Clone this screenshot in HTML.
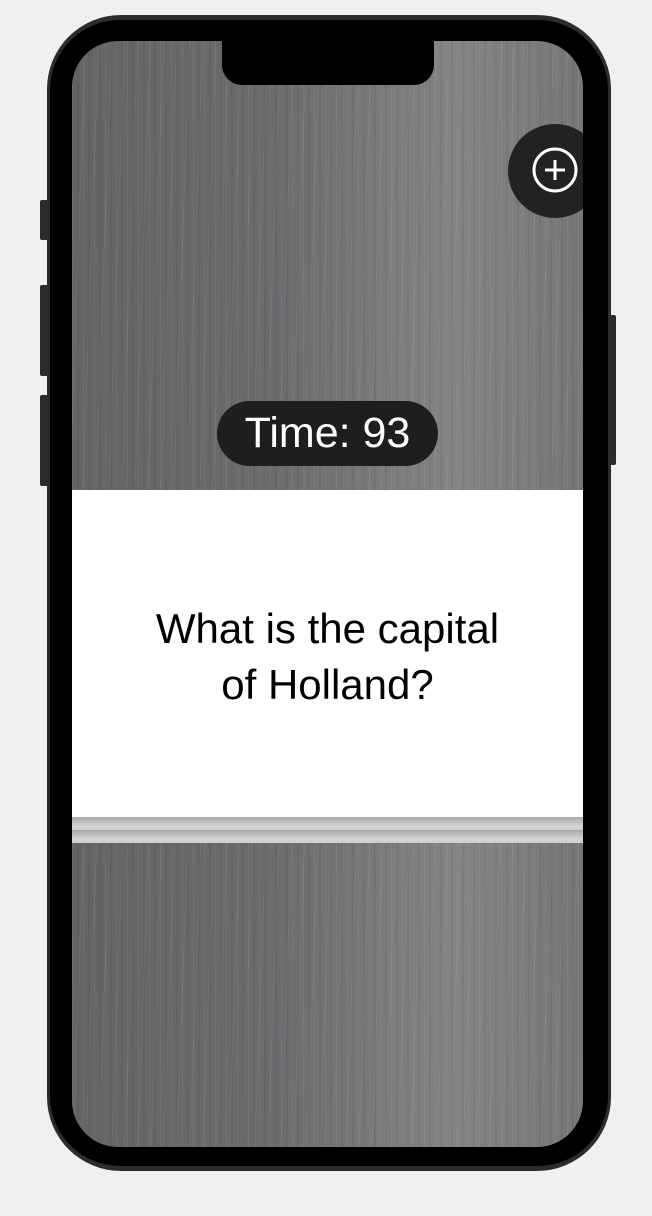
<!DOCTYPE html>
<html><head><meta charset="utf-8"><style>
html,body{margin:0;padding:0;background:#f0f0f0;width:652px;height:1216px;overflow:hidden;font-family:"Liberation Sans",sans-serif}
.btn{position:absolute;background:#2a2a2a;border-radius:2px}
.phone{position:absolute;left:47px;top:15px;width:564px;height:1156px;border-radius:74px;background:#2c2c2c}
.bez{position:absolute;left:3px;top:5px;right:3px;bottom:5px;border-radius:70px;background:#000}
.screen{position:absolute;left:72px;top:41px;width:511px;height:1106px;border-radius:46px;overflow:hidden;
background:
repeating-linear-gradient(90deg,rgba(255,255,255,.06) 0 1px,transparent 1px 5px,rgba(0,0,0,.05) 5px 7px,transparent 7px 11px),
repeating-linear-gradient(92deg,rgba(255,255,255,.05) 0 1px,transparent 1px 13px),
linear-gradient(90deg,#646466 0%,#6c6c6f 40%,#848486 75%,#767678 100%)}
.notch{position:absolute;left:150px;top:0;width:212px;height:44px;background:#000;border-radius:0 0 20px 20px}
.plus{position:absolute;left:436px;top:83px;width:94px;height:94px;border-radius:50%;background:#222}
.timer{position:absolute;left:145px;top:360px;width:221px;height:65px;border-radius:33px;background:#1e1e1e;color:#fff;font-size:43px;text-align:center;line-height:65px}
.card{position:absolute;left:0;top:449px;width:511px;height:327px;background:#fff;color:#000;font-size:42px;text-align:center;box-sizing:border-box;padding-top:111px;line-height:56px}
.s1,.s2{position:absolute;left:0;width:511px;height:13px;background:linear-gradient(#a8a8a8,#d4d4d4 70%,#cfcfcf)}
</style></head><body>
<div class="btn" style="left:40px;top:200px;width:8px;height:40px"></div>
<div class="btn" style="left:40px;top:285px;width:8px;height:91px"></div>
<div class="btn" style="left:40px;top:395px;width:8px;height:91px"></div>
<div class="btn" style="left:610px;top:315px;width:6px;height:150px"></div>
<div class="phone"><div class="bez"></div></div>
<div class="screen">
<div class="notch"></div>
<div class="plus"><svg width="94" height="94" viewBox="0 0 94 94" style="position:absolute;left:0;top:0"><circle cx="47" cy="46" r="21" fill="none" stroke="#fff" stroke-width="3"/><path d="M47 36V56M37 46H57" stroke="#fff" stroke-width="3"/></svg></div>
<div class="timer">Time: 93</div>
<div class="card">What is the capital<br>of Holland?</div>
<div class="s1" style="top:776px"></div>
<div class="s2" style="top:789px"></div>
</div>
</body></html>
